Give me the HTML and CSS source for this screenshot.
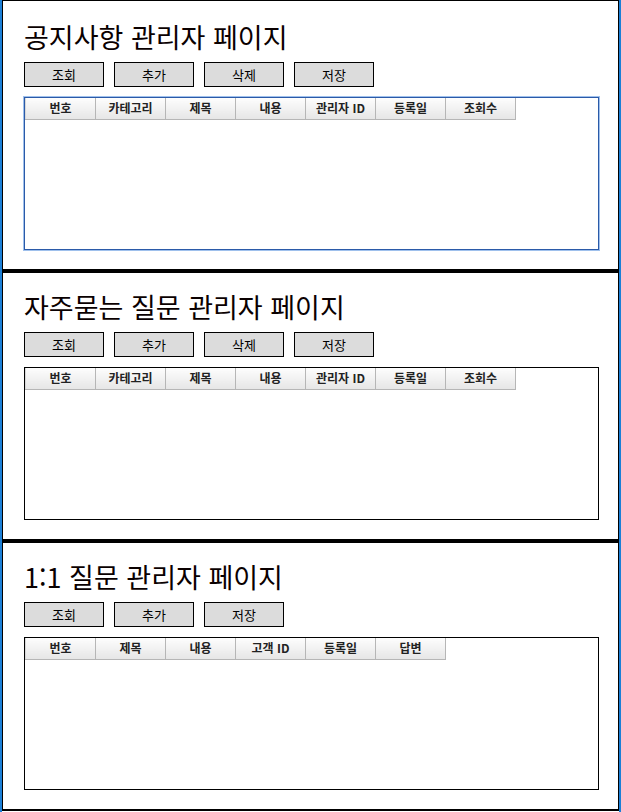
FILE: index.html
```html
<!DOCTYPE html>
<html lang="ko">
<head>
    <meta charset="UTF-8">
    <meta name="viewport" content="width=device-width, initial-scale=1.0">
    <title>관리자 페이지</title>
    <link rel="stylesheet" href="styles.css">
</head>
<body>

<div class="frame">
    <div class="panel first">
        <h1 class="title">공지사항 관리자 페이지</h1>
        <div class="toolbar">
            <button>조회</button>
            <button>추가</button>
            <button>삭제</button>
            <button>저장</button>
        </div>
        <div class="grid focused">
            <table>
                <tr>
                    <th>번호</th>
                    <th>카테고리</th>
                    <th>제목</th>
                    <th>내용</th>
                    <th>관리자 ID</th>
                    <th>등록일</th>
                    <th>조회수</th>
                </tr>
            </table>
        </div>
    </div>

    <div class="panel">
        <h1 class="title">자주묻는 질문 관리자 페이지</h1>
        <div class="toolbar">
            <button>조회</button>
            <button>추가</button>
            <button>삭제</button>
            <button>저장</button>
        </div>
        <div class="grid">
            <table>
                <tr>
                    <th>번호</th>
                    <th>카테고리</th>
                    <th>제목</th>
                    <th>내용</th>
                    <th>관리자 ID</th>
                    <th>등록일</th>
                    <th>조회수</th>
                </tr>
            </table>
        </div>
    </div>

    <div class="panel">
        <h1 class="title">1:1 질문 관리자 페이지</h1>
        <div class="toolbar">
            <button>조회</button>
            <button>추가</button>
            <button>저장</button>
        </div>
        <div class="grid">
            <table>
                <tr>
                    <th>번호</th>
                    <th>제목</th>
                    <th>내용</th>
                    <th>고객 ID</th>
                    <th>등록일</th>
                    <th>답변</th>
                </tr>
            </table>
        </div>
    </div>
</div>

</body>
</html>
```

FILE: styles.css
```css
body {
    margin: 0;
    font-family: "Noto Sans CJK KR", "Noto Sans", sans-serif;
    background-color: #fff;
    color: #000;
}
.frame {
    border-left: 2px solid #1c7fd6;
    border-right: 2px solid #1c7fd6;
    height: 812px;
    box-sizing: border-box;
}
.panel {
    height: 270px;
    box-sizing: border-box;
    border: 2px solid #000;
    border-left-width: 1px;
    border-right-width: 1px;
    padding: 18px 19px 0 21px;
}
.panel.first {
    height: 271px;
    border-top-width: 1px;
    padding-top: 20px;
}
.title {
    margin: 0;
    font-size: 27px;
    font-weight: normal;
    line-height: 31px;
    color: #0a0000;
}
.toolbar {
    display: flex;
    gap: 10px;
    margin-top: 10px;
}
.toolbar button {
    width: 80px;
    height: 25px;
    padding: 0;
    background-color: #dcdcdc;
    border: 1px solid #000;
    font-family: inherit;
    font-size: 13px;
    color: #000;
}
.grid {
    margin-top: 10px;
    height: 153px;
    box-sizing: border-box;
    border: 1px solid #000;
}
.grid.focused {
    border-color: #2b5aa8;
    box-shadow: 0 0 0 1px #9fc0ec;
}
.grid table {
    border-collapse: collapse;
}
.grid th {
    width: 70px;
    height: 21px;
    padding: 0;
    box-sizing: border-box;
    border-right: 1px solid #b6b6b6;
    border-bottom: 1px solid #b6b6b6;
    background: linear-gradient(#fdfdfd, #e6e6e6);
    font-size: 12px;
    font-weight: bold;
    color: #222;
    line-height: 20px;
}
.grid th:first-child {
    border-left: 1px solid #d8d8d8;
}
```
